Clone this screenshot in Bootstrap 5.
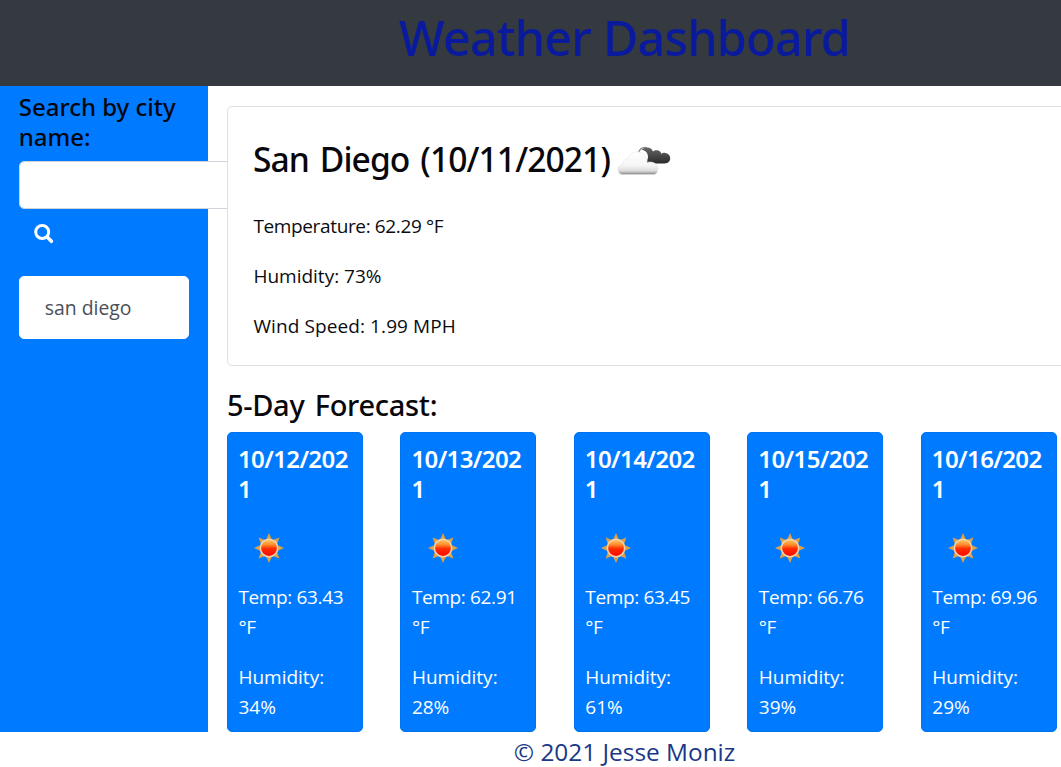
<!DOCTYPE html>
<html lang="en">
<head>
<meta charset="utf-8">
<meta name="viewport" content="width=device-width, initial-scale=1">
<title>Weather Dashboard</title>
<link href="https://cdn.jsdelivr.net/npm/bootstrap@5.3.0/dist/css/bootstrap.min.css" rel="stylesheet">
<style>
  html { font-size: 20px; overflow: hidden; }
  body { font-family: "Open Sans", "Noto Sans", sans-serif; color: #0b0b0f; overflow: hidden; background: #fff; }
  h1, h3, h4, h5 { font-family: "Noto Sans", "Open Sans", sans-serif; font-weight: 500; white-space: nowrap; }
  .page { width: 1249px; }
  .page .row { --bs-gutter-x: 37.5px; }
  .topbar { height: 86px; background: #343a40; padding-top: 7px; }
  .topbar h1 { font-size: 48.5px; line-height: 60px; letter-spacing: -.8px; color: #0a1a9c; }
  .bg-azure { background: #007bff; }
  .panels { height: 646px; }
  .side h5 { font-size: 24px; line-height: 30px; color: #03060f; margin: 6px 0 9px; white-space: normal; }
  .side .form-control { width: 250px; height: 48px; border: 1px solid #ced4da; border-radius: 5px; }
  .side .btn { display: block; height: 48px; padding: 1px 15.5px 0; border: 0; line-height: 1; }
  .past { height: 63px; margin-top: 19px; padding: 0 25px; border: 1px solid #fff; border-radius: 5px; color: #495057; font-size: 19.4px; }
  .card { --bs-card-border-radius: 5px; --bs-card-border-color: #dfdfdf; --bs-card-inner-border-radius: 4px; }
  .today { margin-top: 20px; height: 260px; color: inherit; }
  .today .card-body { padding: 25px; }
  .today h3 { font-size: 33.6px; letter-spacing: -.9px; word-spacing: 3px; line-height: 55px; height: 55px; margin-bottom: 24px; color: #08080c; }
  .today h3 svg { margin: 6px 0 0 2px; }
  .today p { font-size: 19px; line-height: 30px; margin-bottom: 20px; }
  .today p, .day p { padding-left: .5px; }
  .sqz { letter-spacing: -.36px; }
  .wid { letter-spacing: .1px; }
  .main h4 { font-size: 29px; line-height: 36px; letter-spacing: -.3px; word-spacing: 3px; margin: 21px 0 9px; color: #08080c; }
  .day { height: 300px; background: #007bff; --bs-card-border-color: #0074f0; color: #fff; }
  .day .card-body { padding: 11px 10px; }
  .day h5 { font-size: 24px; font-weight: 600; line-height: 30px; letter-spacing: -.6px; white-space: normal; word-break: break-all; margin-bottom: 13px; }
  .day svg { display: block; margin: 0 0 3px .5px; }
  .day p { font-size: 19px; line-height: 30px; margin-bottom: 20px; }
  footer { font-size: 24.4px; line-height: 40px; color: #1b3787; }
</style>
</head>
<body>
<svg width="0" height="0" class="position-absolute" aria-hidden="true">
  <defs>
    <linearGradient id="cloud" x1="0" y1="0" x2="0" y2="1"><stop offset="0" stop-color="#fff"/><stop offset=".6" stop-color="#f5f5f5"/><stop offset=".84" stop-color="#dcdcdc"/><stop offset="1" stop-color="#858585"/></linearGradient>
    <linearGradient id="dark" x1="0" y1="0" x2="0" y2="1"><stop offset="0" stop-color="#666"/><stop offset="1" stop-color="#2b2b2b"/></linearGradient>
    <linearGradient id="core" x1="0" y1="0" x2="0" y2="1"><stop offset="0" stop-color="#ffc862"/><stop offset=".3" stop-color="#ff8a2a"/><stop offset=".55" stop-color="#ff2a00"/><stop offset="1" stop-color="#ff0800"/></linearGradient>
    <symbol id="sun" viewBox="-31 -31 62 62">
      <path fill="#dda045" d="M0-15 3.2-7.8 10.4-10.4 7.8-3.2 15 0 7.8 3.2 10.4 10.4 3.2 7.8 0 15-3.2 7.8-10.4 10.4-7.8 3.2-15 0-7.8-3.2-10.4-10.4-3.2-7.8z"/>
      <circle r="9.4" fill="#f4d3b0"/><circle r="7.9" fill="url(#core)"/>
    </symbol>
  </defs>
</svg>
<div class="page">
  <header class="topbar text-center"><h1 class="mb-0">Weather Dashboard</h1></header>
  <div class="container-fluid p-0">
    <div class="row panels mx-0">
      <aside class="col-2 side bg-azure">
        <h5>Search by city name:</h5>
        <input class="form-control" type="text" aria-label="City">
        <button class="btn" type="button" aria-label="Search">
          <svg class="d-block" width="20" height="20" viewBox="0 0 20 20" fill="none" stroke="#fff"><circle cx="8.2" cy="8" r="6.5" stroke-width="3"/><path d="m13.2 13 4.2 4.3" stroke-width="3.6" stroke-linecap="round"/></svg>
        </button>
        <div class="past d-flex align-items-center bg-white">san diego</div>
      </aside>
      <main class="col-10 main">
        <section class="card today">
          <div class="card-body">
            <h3 class="d-flex align-items-center"><span>San Diego (10/11/2021)</span>
              <svg class="flex-shrink-0" width="62" height="62" viewBox="0 0 62 62">
                <path fill="url(#dark)" d="M27 24c0-4 3-8.500 8-8.500 3 0 5 1.500 6 4 1-1 2.500-1.500 4-1.300 2.500 0 4 1.800 4.200 3.800 1-1 2.500-1.500 4-1 3 .3 5 2.500 5 5.300 0 3.200-2.400 5.200-5.500 5.200H40c-7 0-13-2.500-13-7.500z"/>
                <path fill="#fff" d="M26 21c0-2 3-3.500 5-3 3 1 5 3.500 5 7l-1 5-9-4z"/>
                <path d="M26.500 21c1-4.500 4.500-6 8.500-5.500" fill="none" stroke="#888" stroke-width="1.200"/>
                <path fill="url(#cloud)" stroke="#e0e0e0" stroke-width=".5" d="M11 42.500c-3 0-5-2-5-5 0-3 2.500-5.500 5-5.500 0-3.500 2.500-5.500 5-5 1.500-5 5.500-7.500 10-7 5.500.5 9 5 9 10.500 1-.5 2.500-.8 4-.5 4.500.5 7 3.500 7 7s-2 5.500-5 5.500z"/>
              </svg>
            </h3>
            <p class="sqz">Temperature: 62.29 °F</p>
            <p>Humidity: 73%</p>
            <p class="wid mb-0">Wind Speed: 1.99 MPH</p>
          </div>
        </section>
        <h4>5-Day Forecast:</h4>
        <div class="row">
          <div class="col-2"><div class="card day"><div class="card-body"><h5>10/12/2021</h5><svg width="62" height="62"><use href="#sun"/></svg><p class="sqz">Temp: 63.43 °F</p><p class="mb-0">Humidity: 34%</p></div></div></div>
          <div class="col-2"><div class="card day"><div class="card-body"><h5>10/13/2021</h5><svg width="62" height="62"><use href="#sun"/></svg><p class="sqz">Temp: 62.91 °F</p><p class="mb-0">Humidity: 28%</p></div></div></div>
          <div class="col-2"><div class="card day"><div class="card-body"><h5>10/14/2021</h5><svg width="62" height="62"><use href="#sun"/></svg><p class="sqz">Temp: 63.45 °F</p><p class="mb-0">Humidity: 61%</p></div></div></div>
          <div class="col-2"><div class="card day"><div class="card-body"><h5>10/15/2021</h5><svg width="62" height="62"><use href="#sun"/></svg><p class="sqz">Temp: 66.76 °F</p><p class="mb-0">Humidity: 39%</p></div></div></div>
          <div class="col-2"><div class="card day"><div class="card-body"><h5>10/16/2021</h5><svg width="62" height="62"><use href="#sun"/></svg><p class="sqz">Temp: 69.96 °F</p><p class="mb-0">Humidity: 29%</p></div></div></div>
        </div>
      </main>
    </div>
  </div>
  <footer class="text-center">© 2021 Jesse Moniz</footer>
</div>
<script src="https://cdn.jsdelivr.net/npm/bootstrap@5.3.0/dist/js/bootstrap.bundle.min.js"></script>
</body>
</html>
